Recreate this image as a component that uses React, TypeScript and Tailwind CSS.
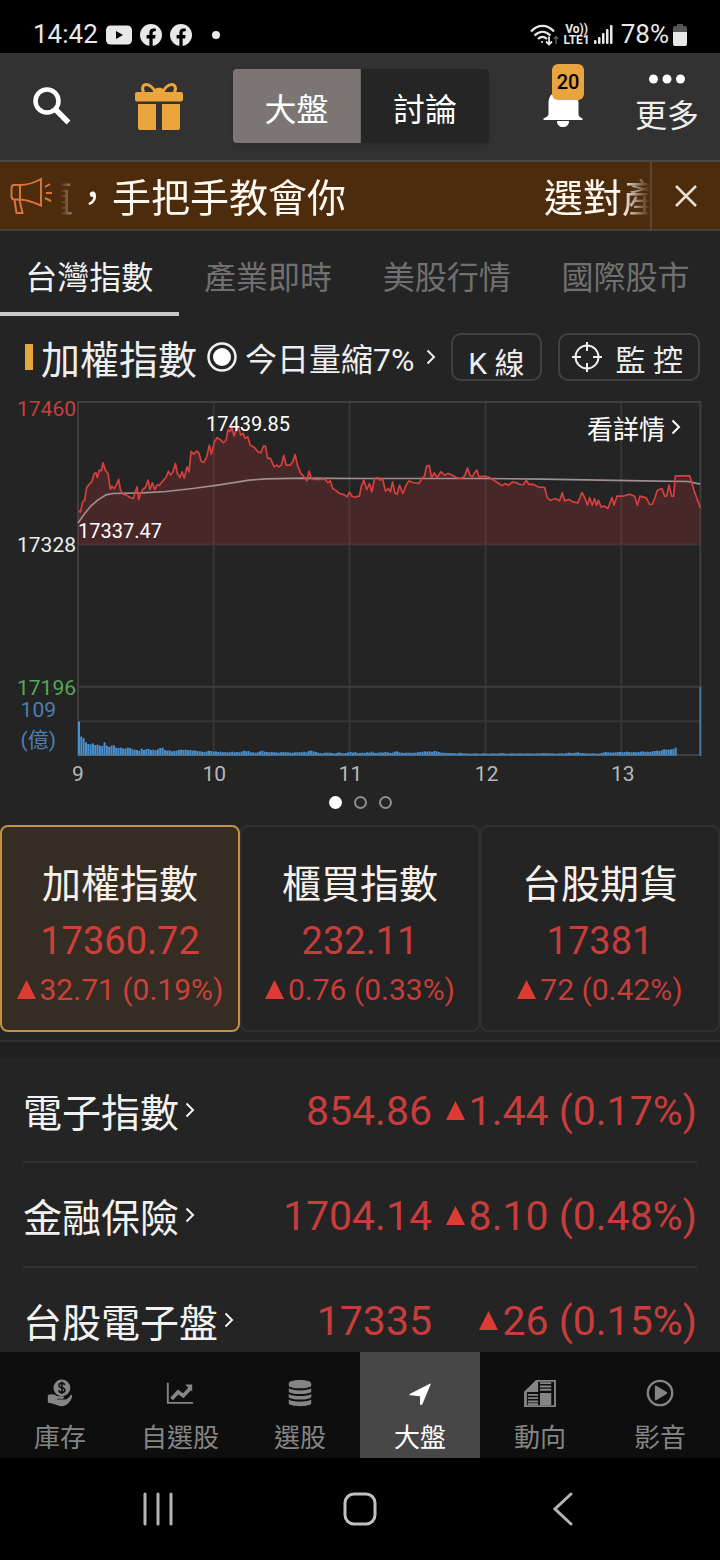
import { ReactNode } from "react";

const hours = ["9", "10", "11", "12", "13"];

const pricePoints =
  "2,326 7,330 14,299 20,294 26,256 34,246 41,239 49,214 54,212 58,226 64,204 70,206 75,182 82,204 90,214 97,262 102,252 108,260 116,246 122,232 127,262 134,276 144,278 156,286 166,289 172,269 177,254 182,292 188,274 194,262 202,256 210,234 216,262 223,242 230,262 237,249 244,249 256,234 264,226 271,207 278,219 285,209 292,184 298,214 306,226 312,209 319,228 327,194 333,209 339,148 347,156 356,147 362,152 370,179 377,181 386,164 394,129 400,156 409,119 417,107 426,112 436,122 444,114 450,82 456,89 461,76 468,102 475,82 481,76 488,99 495,94 501,109 509,104 516,129 529,136 539,149 548,152 556,132 562,132 569,169 577,169 588,194 596,189 602,194 610,189 617,160 624,189 636,189 644,179 651,157 658,189 667,212 676,222 686,236 693,207 700,229 709,232 724,232 739,230 749,242 756,236 764,259 772,264 784,274 799,278 807,284 814,270 822,282 832,286 838,282 844,282 849,254 857,234 866,262 874,244 881,269 889,229 899,226 906,234 913,229 922,267 931,259 937,269 943,239 951,274 957,276 964,249 974,274 984,249 992,236 1004,241 1022,244 1031,229 1039,222 1045,192 1053,190 1060,226 1068,212 1077,226 1088,209 1099,219 1109,214 1124,220 1134,226 1149,229 1159,222 1168,198 1175,219 1182,224 1189,212 1196,204 1202,224 1219,222 1234,226 1249,236 1262,244 1271,250 1282,244 1291,250 1302,240 1314,241 1324,247 1336,247 1344,234 1352,247 1364,246 1379,254 1399,256 1407,286 1416,294 1432,289 1444,296 1452,272 1459,296 1472,292 1484,299 1499,302 1511,271 1519,286 1528,309 1534,286 1542,309 1549,289 1555,309 1561,294 1568,314 1579,312 1589,319 1601,286 1607,309 1616,282 1634,282 1654,276 1669,282 1677,309 1685,282 1704,287 1714,307 1722,306 1729,289 1737,264 1751,259 1759,282 1765,282 1772,249 1780,282 1786,282 1791,221 1834,221 1847,264 1866,317";

const averagePoints =
  "0,362 20,334 40,310 60,293 84,278 104,274 194,272 264,268 344,259 424,248 514,234 564,230 680,228 844,229 1219,229 1394,231 1694,236 1829,238 1866,246";

const volumes = [
  100, 55, 50, 38, 33, 32, 35, 30, 31, 28, 27, 38, 28, 24, 28, 29, 22, 21, 22,
  20, 19, 22, 21, 17, 16, 15, 13, 19, 15, 18, 18, 15, 16, 14, 17, 21, 22, 15,
  13, 14, 11, 12, 13, 15, 16, 15, 16, 14, 15, 13, 14, 12, 11, 10, 9, 11, 13, 12,
  10, 11, 9, 10, 8, 9, 8, 8, 10, 8, 9, 8, 10, 13, 11, 12, 8, 8, 7, 8, 11, 13,
  10, 9, 8, 9, 8, 8, 7, 8, 9, 8, 8, 7, 7, 8, 8, 9, 8, 10, 8, 12, 13, 11, 9, 7,
  6, 5, 7, 7, 7, 6, 5, 6, 8, 6, 5, 6, 8, 9, 7, 9, 6, 6, 7, 6, 8, 7, 10, 7, 6,
  7, 8, 7, 9, 8, 6, 7, 10, 11, 8, 7, 6, 7, 7, 6, 7, 7, 8, 9, 10, 11, 10, 11, 9,
  12, 11, 9, 7, 7, 6, 6, 6, 6, 5, 5, 7, 6, 5, 5, 4, 4, 5, 5, 4, 4, 5, 5, 4, 4,
  5, 5, 4, 5, 6, 5, 4, 4, 5, 5, 4, 5, 5, 5, 4, 5, 5, 5, 4, 5, 5, 5, 6, 6, 5, 5,
  5, 4, 4, 5, 5, 4, 6, 7, 6, 6, 7, 8, 6, 6, 5, 5, 4, 5, 5, 4, 4, 6, 8, 9, 8, 8,
  7, 8, 9, 9, 8, 9, 10, 9, 8, 9, 8, 9, 10, 11, 9, 10, 9, 11, 12, 13, 12, 14, 17,
  16, 16, 17, 18, 22,
];

// the bars stop at 1796, before the closing auction
const barStep = 1796 / volumes.length;

const cards = [
  { name: "加權指數", price: "17360.72", change: "32.71 (0.19%)", active: true },
  { name: "櫃買指數", price: "232.11", change: "0.76 (0.33%)", active: false },
  { name: "台股期貨", price: "17381", change: "72 (0.42%)", active: false },
];

const rows = [
  { name: "電子指數", price: "854.86", change: "1.44 (0.17%)" },
  { name: "金融保險", price: "1704.14", change: "8.10 (0.48%)" },
  { name: "台股電子盤", price: "17335", change: "26 (0.15%)" },
];

const Chevron = ({ className }: { className: string }) => (
  <svg viewBox="0 0 10 16" className={className} fill="none" stroke="currentColor" strokeWidth="2">
    <path d="M1.5 1.5 8 8l-6.500 6.500" />
  </svg>
);

const Triangle = () => (
  <svg viewBox="0 0 20 20" className="mb-[2px] size-[19px] shrink-0" fill="#dc3c34">
    <path d="M10 0 20 20H0Z" />
  </svg>
);

const Facebook = () => (
  <svg viewBox="0 0 24 24" className="size-[22px]">
    <circle cx="12" cy="12" r="12" fill="#e8e8e8" />
    <path
      d="M10.200 24v-8.300H7.200v-3.600h3V9.500c0-3 1.800-4.700 4.600-4.700 1.300 0 2.400.2 2.400.2v3h-1.500c-1.400 0-1.900.9-1.900 1.800v2.300h3.200l-.5 3.600h-2.700V24Z"
      fill="#000"
    />
  </svg>
);

const StatusBar = () => (
  <div className="flex h-[53px] shrink-0 items-center justify-between bg-black pt-4 pr-[33px] pl-[33px] text-[26px] text-[#e8e8e8]">
    <div className="flex items-center gap-2">
      <span>14:42</span>
      <svg viewBox="0 0 26 20" className="h-5 w-[26px]">
        <rect width="26" height="19" y="0.500" rx="4.500" fill="#e8e8e8" />
        <path d="M10 6v8l7-4Z" fill="#000" />
      </svg>
      <Facebook />
      <Facebook />
      <span className="ml-3 size-2 rounded-full bg-[#e8e8e8]" />
    </div>
    <div className="flex items-center gap-1">
      <svg viewBox="0 0 30 24" className="h-6 w-[30px]" fill="none" stroke="#e8e8e8" strokeWidth="2.200">
        <path d="M2 8.500C9 1 18 1 25 8.500M5.500 12.500c5-5 11-5 16 0M9 16c3-2.800 6-2.800 9 0" />
        <circle cx="13" cy="19" r="1" fill="#e8e8e8" stroke="none" />
        <path d="M20 13.500v8M17 18.500l3 3 3-3" strokeWidth="1.800" />
        <path d="M27 21v-7M25 16l2-2.500 2 2.500" strokeWidth="1.500" stroke="#5a5a5a" />
      </svg>
      <div className="flex flex-col items-center text-[12px] leading-[11px] font-bold">
        <span>Vo))</span>
        <span>LTE1</span>
      </div>
      <svg viewBox="0 0 19 20" className="h-5 w-[19px]" fill="#e8e8e8">
        <rect x="0" y="15" width="2.500" height="4" rx="1" />
        <rect x="4" y="12" width="2.500" height="7" rx="1" />
        <rect x="8" y="8" width="2.500" height="11" rx="1" />
        <rect x="12" y="4" width="2.500" height="15" rx="1" />
        <rect x="16" y="0" width="2.500" height="19" rx="1" />
      </svg>
      <span className="ml-1">78%</span>
      <svg viewBox="0 0 14 22" className="h-[22px] w-[14px]">
        <path d="M4 0h6v2h2a2 2 0 0 1 2 2v5H0V4a2 2 0 0 1 2-2h2Z" fill="#555" />
        <path d="M0 8h14v12a2 2 0 0 1-2 2H2a2 2 0 0 1-2-2Z" fill="#e8e8e8" />
      </svg>
    </div>
  </div>
);

const Header = () => (
  <header className="flex h-[109px] shrink-0 items-center border-b-2 border-[#484848] bg-[#323232] pr-1 pb-[2px]">
    <button type="button" aria-label="搜尋" className="flex w-[104px] justify-center">
      <svg viewBox="0 0 38 38" className="size-[38px]" fill="none" stroke="#fff">
        <circle cx="14" cy="14" r="11.500" strokeWidth="4.500" />
        <path d="m22.500 22.500 13 13" strokeWidth="5.500" />
      </svg>
    </button>
    <button type="button" aria-label="禮物" className="flex w-[110px] justify-center">
      <svg viewBox="0 0 48 48" className="size-12" fill="#eaa53c">
        <rect x="0" y="10" width="48" height="9.500" rx="2" />
        <path d="M3 22h18v26H5a2 2 0 0 1-2-2ZM27 22h18v24a2 2 0 0 1-2 2H27Z" />
        <path
          d="M20 10C18 5 14 2.500 11 2.500S6 7 9 10M28 10c2-5 6-7.500 9-7.500s5 4.500 2 7.500"
          fill="none"
          stroke="#eaa53c"
          strokeWidth="3"
        />
        <path d="M18 11c0-7 12-7 12 0Z" />
      </svg>
    </button>
    <div className="flex flex-1 justify-center">
      <div className="grid w-64 grid-cols-2 overflow-hidden rounded text-[32px] text-white shadow-md">
        <button type="button" className="h-[74px] border-r border-[#6a6664] bg-[#7b7673] pt-2">
          大盤
        </button>
        <button type="button" className="h-[74px] bg-[#252525] pt-2">
          討論
        </button>
      </div>
    </div>
    <button type="button" aria-label="通知" className="relative flex w-[110px] justify-center">
      <svg viewBox="0 0 40 40" className="mt-1 size-10" fill="#fff">
        <path d="M20 2C10 2 5.500 8 5.500 15v11c0 2-2 3-5 4.500V32h39v-1.500c-3-1.500-4-2.500-4-4.500V15C35.500 8 30 2 20 2ZM14 33h12c0 4-2.500 6-6 6s-6-2-6-6Z" />
      </svg>
      <span className="absolute -top-5 left-11 flex h-9 w-8 items-center justify-center rounded-md bg-[#e8a43e] text-[20px] font-medium text-black">
        20
      </span>
    </button>
    <button
      type="button"
      className="flex w-[98px] flex-col items-center pb-1 text-[32px] leading-9 text-[#eee]"
    >
      <svg viewBox="0 0 36 10" className="mb-[14px] h-[10px] w-9" fill="#fff">
        <circle cx="4.500" cy="5" r="4.500" />
        <circle cx="18" cy="5" r="4.500" />
        <circle cx="31.500" cy="5" r="4.500" />
      </svg>
      更多
    </button>
  </header>
);

const Banner = () => (
  <div className="flex h-[69px] shrink-0 items-center border-b-2 border-[#484040] bg-[#4d2c0d]">
    <svg viewBox="0 0 44 38" className="mx-2 h-[38px] w-11 shrink-0" fill="none" stroke="#d9743a" strokeWidth="2">
      <path d="M12 8H6C4 8 3.500 9 3.500 11v8c0 2 1 3.500 3 3.500H12c7 0 14 3 21 6V2C26 6 19 8 12 8ZM12 8v14M6.500 23l2 13h6l-3-13" />
      <path d="m37 10 5-3M38 16h6M37 21l6 3" />
    </svg>
    <div className="flex min-w-0 flex-1 overflow-hidden pt-2 whitespace-nowrap [mask-image:linear-gradient(to_right,transparent,#000_28px,#000_calc(100%-28px),transparent)]">
      <p className="-ml-[26px] flex gap-[198px] text-[39px] text-[#fff8f0]">
        <span>值，手把手教會你</span>
        <span>選對產業</span>
      </p>
    </div>
    <button
      type="button"
      aria-label="關閉"
      className="flex h-full w-[70px] items-center justify-center border-l-2 border-[#5c4633]"
    >
      <svg viewBox="0 0 22 22" className="size-[22px]" stroke="#eadfd5" strokeWidth="2.500">
        <path d="m1 1 20 20M21 1 1 21" />
      </svg>
    </button>
  </div>
);

const Tabs = () => (
  <nav className="grid grid-cols-4 pr-[5px] text-[32px] text-[#707070]">
    <button type="button" className="h-[85px] border-b-4 border-[#c9c9c9] pt-3 text-[#f2f2f2]">
      台灣指數
    </button>
    <button type="button" className="h-[85px] border-b-4 border-transparent pt-3">
      產業即時
    </button>
    <button type="button" className="h-[85px] border-b-4 border-transparent pt-3">
      美股行情
    </button>
    <button type="button" className="h-[85px] border-b-4 border-transparent pt-3">
      國際股市
    </button>
  </nav>
);

const TitleRow = () => (
  <div className="mt-4 flex h-[50px] items-center pr-5 pl-[25px] text-[#eeeeee]">
    <span className="h-[26px] w-2 bg-[#e5a83f]" />
    <h1 className="ml-2 pt-2 text-[39px]">加權指數</h1>
    <svg viewBox="0 0 30 30" className="ml-[10px] size-[30px]" fill="none">
      <circle cx="15" cy="15" r="13.500" stroke="#eee" strokeWidth="2.500" />
      <circle cx="15" cy="15" r="9" fill="#fff" />
    </svg>
    <button type="button" className="ml-2 flex items-center gap-3 text-[32px] whitespace-nowrap">
      <span className="pt-[6px]">今日量縮7%</span>
      <Chevron className="h-4 w-[10px]" />
    </button>
    <div className="ml-auto flex gap-4 text-[30px] whitespace-nowrap">
      <button type="button" className="h-12 rounded-[10px] border-2 border-[#414141] px-[15px] pt-[6px]">
        K 線
      </button>
      <button
        type="button"
        className="flex h-12 items-center gap-[14px] rounded-[10px] border-2 border-[#414141] pr-[15px] pl-3"
      >
        <svg viewBox="0 0 30 30" className="size-[30px]" fill="none" stroke="#eee" strokeWidth="2">
          <circle cx="15" cy="15" r="11.500" />
          <path d="M15 0v9M15 21v9M0 15h9M21 15h9" />
        </svg>
        <span className="pt-[6px]">監 控</span>
      </button>
    </div>
  </div>
);

const Chart = () => (
  <section className="mt-[15px] pr-[19px]">
    <div className="flex text-[21px] leading-6">
      <div className="flex w-[78px] shrink-0 flex-col pr-[2px] text-right">
        <span className="text-[#c93f3d]">17460</span>
        <span className="mt-28 text-[#ececec]">17328</span>
        <span className="mt-[119px] text-[#55a855]">17196</span>
        <span className="pr-5 leading-5 text-[#4a7fb5]">109</span>
        <span className="pr-5 leading-10 text-[#4a7fb5]">(億)</span>
      </div>
      <div className="relative mt-[5px] h-[354px] flex-1">
        <svg
          viewBox="0 0 1868 1060"
          preserveAspectRatio="none"
          className="h-full w-full overflow-visible"
          fill="none"
        >
          <path d="M407 0V1057M814 0V1057M1222 0V1057M1629 0V1057M0 427H1866M0 956H1866" stroke="#353535" strokeWidth="6" />
          <path d="M0 0H1866V1057H0ZM0 853H1866" stroke="#3f3f3f" strokeWidth="6" />
          <polygon points={`0,427 ${pricePoints} 1866,427`} fill="#c8323c" fillOpacity="0.220" />
          <polyline points={averagePoints} stroke="#a08f8f" strokeWidth="5" />
          <polyline points={pricePoints} stroke="#d8403e" strokeWidth="5" strokeLinejoin="round" />
          <g fill="#4a90d0">
            {volumes.map((volume, i) => (
              <rect key={i} x={i * barStep} y={1057 - volume} width="6" height={volume} />
            ))}
          </g>
          <path d="M0 1057H1796M1866 853V1060" stroke="#4a7fa8" strokeWidth="5" />
        </svg>
        <span className="absolute top-[10px] left-32 text-[20px] text-white">17439.85</span>
        <span className="absolute top-[117px] left-0 text-[20px] text-white">17337.47</span>
        <button
          type="button"
          className="absolute top-2 right-5 flex items-center gap-[6px] text-[26px] leading-9 text-white"
        >
          <span className="pt-[2px]">看詳情</span>
          <Chevron className="mb-1 h-4 w-[10px]" />
        </button>
      </div>
    </div>
    <div className="grid grid-cols-[136fr_136fr_136fr_136fr_78fr] pl-[78px] text-[21px] leading-6 text-[#b8b8b8]">
      {hours.map((hour) => (
        <span key={hour} className="mt-[2px] w-fit -translate-x-1/2">
          {hour}
        </span>
      ))}
    </div>
  </section>
);

const Pager = () => (
  <div className="mt-[10px] flex justify-center gap-3">
    <span className="size-[13px] rounded-full bg-white" />
    <span className="size-[13px] rounded-full border-2 border-[#8f8f8f]" />
    <span className="size-[13px] rounded-full border-2 border-[#8f8f8f]" />
  </div>
);

const NavItem = ({ label, active, children }: { label: string; active?: boolean; children: ReactNode }) => (
  <button
    type="button"
    className={
      active
        ? "flex h-[106px] flex-col items-center bg-[#474747] pt-[26px] text-white"
        : "flex h-[106px] flex-col items-center pt-[26px] text-[#858585]"
    }
  >
    <svg viewBox="0 0 34 32" className="h-8 w-[34px]" fill="currentColor">
      {children}
    </svg>
    <span className="mt-[10px] text-[26px] leading-10">{label}</span>
  </button>
);

const BottomNav = () => (
  <nav className="grid shrink-0 grid-cols-6 bg-[#0e0e0e]">
    <NavItem label="庫存">
      <circle cx="19" cy="10.500" r="9" />
      <path
        d="M22 7.500c-.5-1.500-1.600-2-3-2-1.700 0-3 .8-3 2.400 0 3.600 6.200 1.600 6.200 5 0 1.600-1.400 2.600-3.200 2.600-1.700 0-2.900-.8-3.300-2.400M19 4v13"
        fill="none"
        stroke="#0e0e0e"
        strokeWidth="1.700"
      />
      <path d="M4 18c5-1.500 8 0 10 1.500h6c1.500 0 1.500 2.500 0 2.500h-6v1h7c4 0 6-3 8-5.500 1.500 1 1 3 0 5-2 4-5 7.500-10 7.500-6 0-8-3-15-3.500Z" />
    </NavItem>
    <NavItem label="自選股">
      <path d="M3 5h2v20.500h26v2H3Z" />
      <path d="m8 22.500 7-7.500 5.500 4 7.500-8" fill="none" stroke="currentColor" strokeWidth="4" />
      <path d="M22.500 7H30v7.500Z" />
    </NavItem>
    <NavItem label="選股">
      <path d="M5 6c0-5 24-5 24 0v2c0 4-24 4-24 0ZM5 11c4 3 20 3 24 0v3c0 4-24 4-24 0ZM5 17c4 3 20 3 24 0v3c0 4-24 4-24 0ZM5 23c4 3 20 3 24 0v4c0 4-24 4-24 0Z" />
    </NavItem>
    <NavItem label="大盤" active>
      <path d="M28.500 6.500 19.500 28c-.5 1-2.500 1-2.500-.3V19.500L6.500 18.500c-1-.2-1-1.300 0-1.800L27.500 6c.8-.4 1.300 0 1 .5Z" />
    </NavItem>
    <NavItem label="動向">
      <path d="M13 2h21v29H0V15Zm2 2v11H3v14h29V4Z" fillRule="evenodd" />
      <path d="M13 2v13H0ZM17 16h12v13H17Z" />
      <path
        d="M17 5.500h12M17 9h12M17 12.500h12M4 18h11M4 21.500h11M4 25h11M4 28h11"
        fill="none"
        stroke="currentColor"
        strokeWidth="2"
      />
    </NavItem>
    <NavItem label="影音">
      <circle cx="17" cy="16" r="13" fill="none" stroke="currentColor" strokeWidth="2.500" />
      <path d="M11.500 9v14c0 1 .7 1 1.500.7l11-6.700c.8-.5.8-1.500 0-2l-11-6.700c-.8-.4-1.500-.3-1.500.7Z" />
    </NavItem>
  </nav>
);

const SystemNav = () => (
  <div className="flex h-[102px] shrink-0 items-center justify-between bg-black px-[141px]">
    <button type="button" aria-label="最近使用">
      <svg viewBox="0 0 34 34" className="size-[34px]" stroke="#b5b5b5" strokeWidth="3" strokeLinecap="round">
        <path d="M4 2v30M17 2v30M30 2v30" />
      </svg>
    </button>
    <button type="button" aria-label="主畫面">
      <svg viewBox="0 0 34 34" className="size-[34px]" fill="none" stroke="#c0c0c0" strokeWidth="3">
        <rect x="2" y="2" width="30" height="30" rx="9" />
      </svg>
    </button>
    <button type="button" aria-label="返回">
      <svg viewBox="0 0 34 34" className="size-[34px]" fill="none" stroke="#b5b5b5" strokeWidth="3" strokeLinecap="round">
        <path d="M26 2 10 17l16 15" />
      </svg>
    </button>
  </div>
);

const App = () => {
  return (
    <div className="flex h-screen flex-col bg-[#242424] font-[Roboto,'Noto_Sans_CJK_TC',sans-serif]">
      <StatusBar />
      <Header />
      <Banner />
      <main className="min-h-0 flex-1 overflow-y-auto [scrollbar-width:none]">
        <Tabs />
        <TitleRow />
        <Chart />
        <Pager />
        <div className="mt-4 grid grid-cols-3">
          {cards.map((card) => (
            <button
              type="button"
              key={card.name}
              className={
                card.active
                  ? "flex h-[207px] flex-col items-center rounded-lg border-2 border-[#c4923f] bg-[#352d24] pt-[30px] text-[#cd4039]"
                  : "flex h-[207px] flex-col items-center rounded-lg border-2 border-[#303030] pt-[30px] text-[#c73d3b]"
              }
            >
              <span className="text-[39px] leading-[56px] text-[#f7f1ea]">{card.name}</span>
              <span className="text-[38px] leading-[56px]">{card.price}</span>
              <span className="flex items-center gap-1 text-[30px] leading-[42px] whitespace-nowrap">
                <Triangle />
                {card.change}
              </span>
            </button>
          ))}
        </div>
        <div className="mt-2 h-[18px] border-t-2 border-[#303030] bg-[#202020]" />
        <ul className="px-[23px]">
          {rows.map((row) => (
            <li
              key={row.name}
              className="flex h-[105px] items-center border-b-2 border-[#313131] pt-1 text-[41px] text-[#c73d3b]"
            >
              <a href="#" className="flex items-center gap-[6px] text-[39px] text-[#f2f2f2]">
                <span className="pt-[6px]">{row.name}</span>
                <Chevron className="mb-1 h-4 w-[10px]" />
              </a>
              <span className="ml-auto">{row.price}</span>
              <span className="flex w-[265px] items-center justify-end gap-1 whitespace-nowrap">
                <Triangle />
                {row.change}
              </span>
            </li>
          ))}
        </ul>
      </main>
      <BottomNav />
      <SystemNav />
    </div>
  );
};

export default App;
